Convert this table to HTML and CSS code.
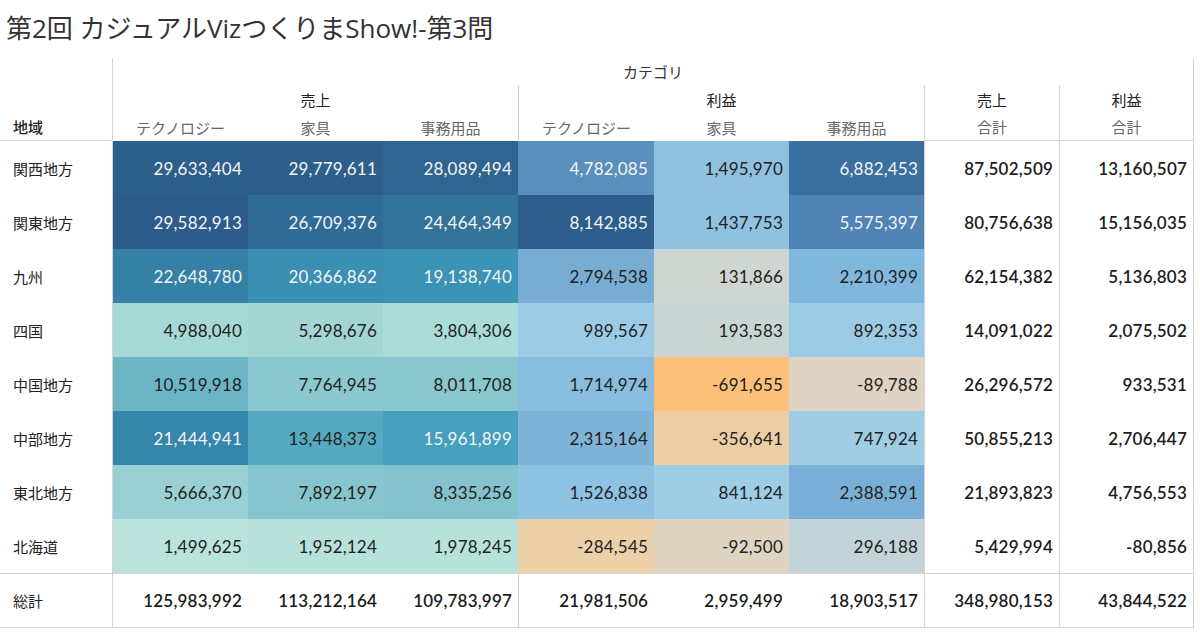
FILE: index.html
```html
<!DOCTYPE html>
<html>
<head>
<meta charset="utf-8">
<link rel="stylesheet" href="styles.css">
</head>
<body>
<div class="sheet">
    <h1 class="title">第2回 カジュアルVizつくりまShow!-第3問</h1>

    <div class="crosstab">
        <!-- header row 1 -->
        <div class="hd lab"></div>
        <div class="hd top cat">カテゴリ</div>

        <!-- header row 2 -->
        <div class="hd lab"></div>
        <div class="hd measure span3">売上</div>
        <div class="hd measure span3 sep">利益</div>
        <div class="hd measure sep">売上</div>
        <div class="hd measure sep end">利益</div>

        <!-- header row 3 -->
        <div class="hd lab region under">地域</div>
        <div class="hd sub">テクノロジー</div>
        <div class="hd sub">家具</div>
        <div class="hd sub">事務用品</div>
        <div class="hd sub sep">テクノロジー</div>
        <div class="hd sub">家具</div>
        <div class="hd sub">事務用品</div>
        <div class="hd sub sep under">合計</div>
        <div class="hd sub sep end under">合計</div>

        <!-- 関西地方 -->
        <div class="lab row-name">関西地方</div>
        <div class="cell lt" style="background:#2d5f8b">29,633,404</div>
        <div class="cell lt" style="background:#2e5f8b">29,779,611</div>
        <div class="cell lt" style="background:#2f6590">28,089,494</div>
        <div class="cell lt" style="background:#5a8ebb">4,782,085</div>
        <div class="cell" style="background:#8fc0df">1,495,970</div>
        <div class="cell lt" style="background:#3a6f9f">6,882,453</div>
        <div class="cell total sep">87,502,509</div>
        <div class="cell total sep end">13,160,507</div>

        <!-- 関東地方 -->
        <div class="lab row-name">関東地方</div>
        <div class="cell lt" style="background:#2d5c8a">29,582,913</div>
        <div class="cell lt" style="background:#306b95">26,709,376</div>
        <div class="cell lt" style="background:#327399">24,464,349</div>
        <div class="cell lt" style="background:#2c5d8b">8,142,885</div>
        <div class="cell" style="background:#90c1e0">1,437,753</div>
        <div class="cell lt" style="background:#4e83b3">5,575,397</div>
        <div class="cell total sep">80,756,638</div>
        <div class="cell total sep end">15,156,035</div>

        <!-- 九州 -->
        <div class="lab row-name">九州</div>
        <div class="cell lt" style="background:#3581a6">22,648,780</div>
        <div class="cell lt" style="background:#3a8fb3">20,366,862</div>
        <div class="cell lt" style="background:#3b93b5">19,138,740</div>
        <div class="cell" style="background:#78acd3">2,794,538</div>
        <div class="cell" style="background:#cfd5d0">131,866</div>
        <div class="cell" style="background:#80b7dc">2,210,399</div>
        <div class="cell total sep">62,154,382</div>
        <div class="cell total sep end">5,136,803</div>

        <!-- 四国 -->
        <div class="lab row-name">四国</div>
        <div class="cell" style="background:#a6d8d6">4,988,040</div>
        <div class="cell" style="background:#a3d5d3">5,298,676</div>
        <div class="cell" style="background:#acdcd8">3,804,306</div>
        <div class="cell" style="background:#9ccbe6">989,567</div>
        <div class="cell" style="background:#c9d5d3">193,583</div>
        <div class="cell" style="background:#9dcbe5">892,353</div>
        <div class="cell total sep">14,091,022</div>
        <div class="cell total sep end">2,075,502</div>

        <!-- 中国地方 -->
        <div class="lab row-name">中国地方</div>
        <div class="cell" style="background:#6cb5c5">10,519,918</div>
        <div class="cell" style="background:#8cc8cf">7,764,945</div>
        <div class="cell" style="background:#89c6ce">8,011,708</div>
        <div class="cell" style="background:#88bde0">1,714,974</div>
        <div class="cell" style="background:#fdc07a">-691,655</div>
        <div class="cell" style="background:#dfd3c3">-89,788</div>
        <div class="cell total sep">26,296,572</div>
        <div class="cell total sep end">933,531</div>

        <!-- 中部地方 -->
        <div class="lab row-name">中部地方</div>
        <div class="cell lt" style="background:#3685aa">21,444,941</div>
        <div class="cell" style="background:#56a9c0">13,448,373</div>
        <div class="cell lt" style="background:#45a0bd">15,961,899</div>
        <div class="cell" style="background:#7fb3d8">2,315,164</div>
        <div class="cell" style="background:#edcda4">-356,641</div>
        <div class="cell" style="background:#a0cde4">747,924</div>
        <div class="cell total sep">50,855,213</div>
        <div class="cell total sep end">2,706,447</div>

        <!-- 東北地方 -->
        <div class="lab row-name">東北地方</div>
        <div class="cell" style="background:#9ad0d3">5,666,370</div>
        <div class="cell" style="background:#87c5ce">7,892,197</div>
        <div class="cell" style="background:#84c3cd">8,335,256</div>
        <div class="cell" style="background:#8ec2e2">1,526,838</div>
        <div class="cell" style="background:#9fcde5">841,124</div>
        <div class="cell" style="background:#79afd6">2,388,591</div>
        <div class="cell total sep">21,893,823</div>
        <div class="cell total sep end">4,756,553</div>

        <!-- 北海道 -->
        <div class="lab row-name">北海道</div>
        <div class="cell" style="background:#b9e3db">1,499,625</div>
        <div class="cell" style="background:#b6e2da">1,952,124</div>
        <div class="cell" style="background:#b6e2da">1,978,245</div>
        <div class="cell" style="background:#ecd0a8">-284,545</div>
        <div class="cell" style="background:#dfd4c1">-92,500</div>
        <div class="cell" style="background:#c2d4d8">296,188</div>
        <div class="cell total sep">5,429,994</div>
        <div class="cell total sep end">-80,856</div>

        <!-- 総計 -->
        <div class="lab row-name grand">総計</div>
        <div class="cell total grand">125,983,992</div>
        <div class="cell total grand">113,212,164</div>
        <div class="cell total grand">109,783,997</div>
        <div class="cell total grand sep">21,981,506</div>
        <div class="cell total grand">2,959,499</div>
        <div class="cell total grand">18,903,517</div>
        <div class="cell total grand sep">348,980,153</div>
        <div class="cell total grand sep end">43,844,522</div>
    </div>
</div>
</body>
</html>
```

FILE: styles.css
```css
* {
    box-sizing: border-box;
}

body {
    margin: 0;
    background: #fff;
    font-family: Lato, "Noto Sans CJK JP", sans-serif;
    color: #333;
}

.title {
    margin: 0;
    height: 58px;
    padding-left: 6px;
    line-height: 56px;
    font-family: "Open Sans", "Noto Sans CJK JP", sans-serif;
    font-size: 26px;
    font-weight: 400;
    color: #333;
    white-space: nowrap;
}

.crosstab {
    display: grid;
    grid-template-columns: 113px 135px 135px 135px 136px 135px 135px 135px 135px;
    grid-template-rows: 27px 28px 28px repeat(8, 54px) 55px;
}

/* header */
.hd {
    display: flex;
    align-items: center;
    justify-content: center;
    font-size: 15px;
    white-space: nowrap;
}

.cat {
    grid-column: 2 / 10;
    color: #333;
    border-right: 1px solid #d4d4d4;
}

.measure {
    color: #222;
    font-weight: 400;
}

.span3 {
    grid-column: span 3;
}

.sub {
    color: #666;
}

.region {
    justify-content: flex-start;
    padding-left: 13px;
    font-weight: 500;
    color: #222;
}

.under {
    border-bottom: 1px solid #d4d4d4;
}

/* label column */
.lab {
    border-right: 1px solid #d4d4d4;
}

.row-name {
    display: flex;
    align-items: center;
    padding-left: 13px;
    font-size: 15px;
    color: #222;
}

/* body cells */
.cell {
    display: flex;
    align-items: center;
    justify-content: flex-end;
    padding-right: 6px;
    font-size: 17px;
    letter-spacing: 0.2px;
    color: #222;
}

.cell.lt {
    color: #f4f4f4;
}

.cell.total {
    font-weight: 600;
    color: #1c1c1c;
}

.sep {
    border-left: 1px solid #d4d4d4;
}

.end {
    border-right: 1px solid #d4d4d4;
}

.grand {
    border-top: 1px solid #d4d4d4;
    border-bottom: 1px solid #d4d4d4;
}
```
